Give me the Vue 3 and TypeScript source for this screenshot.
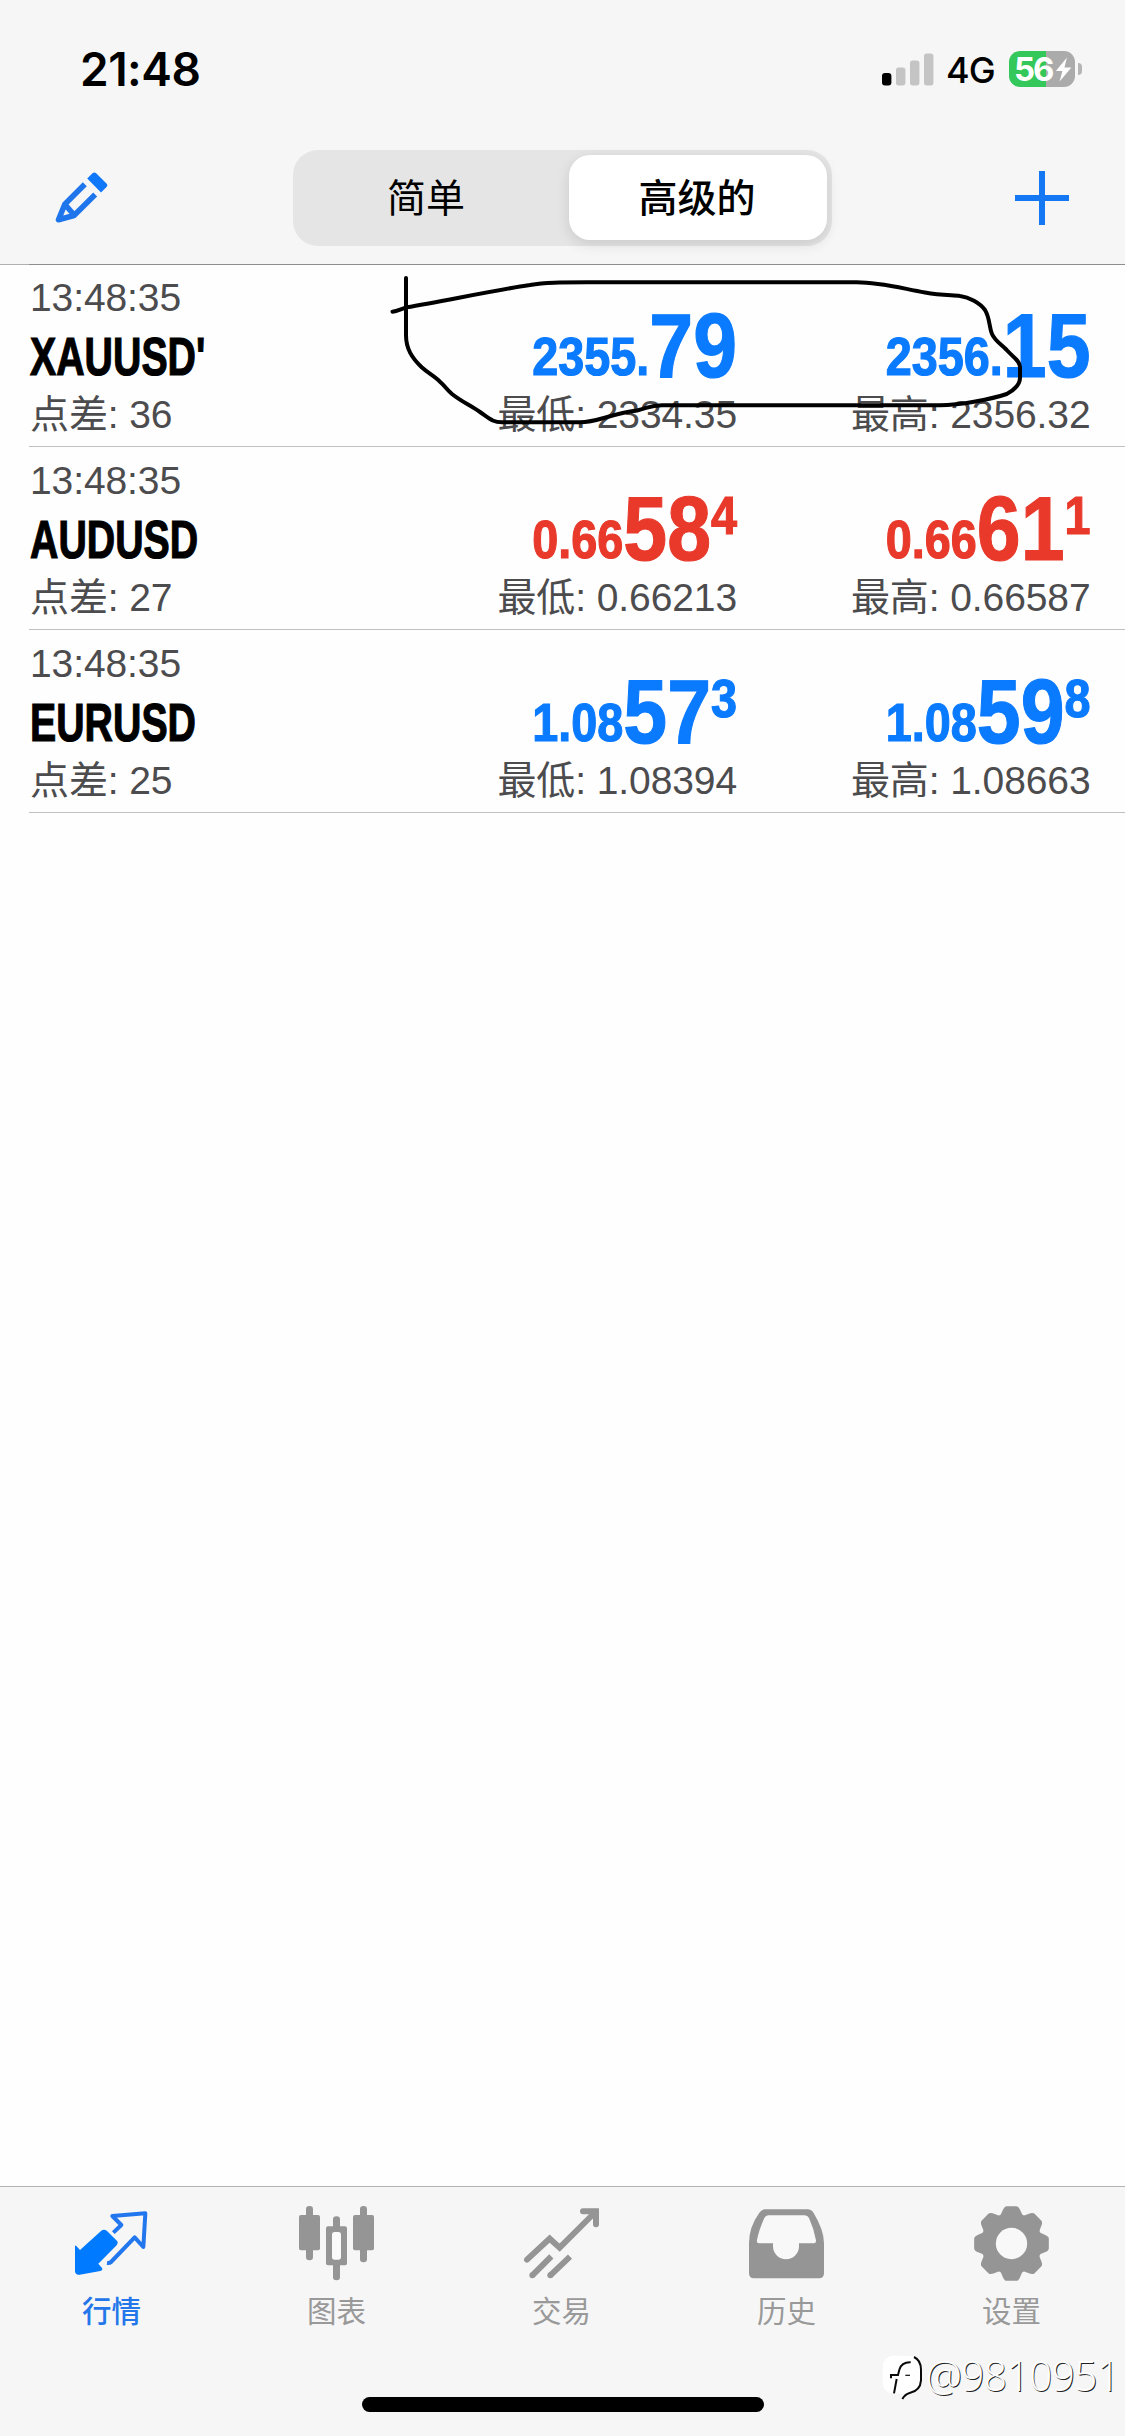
<script setup lang="ts">
interface Price {
  lead: string
  big: string
  sup: string
  label: string
  extreme: string
}

interface Quote {
  time: string
  symbol: string
  spread: number
  trend: 'up' | 'down'
  prices: Price[]
}

const quotes: Quote[] = [
  {
    time: '13:48:35',
    symbol: "XAUUSD'",
    spread: 36,
    trend: 'up',
    prices: [
      { lead: '2355.', big: '79', sup: '', label: '最低', extreme: '2334.35' },
      { lead: '2356.', big: '15', sup: '', label: '最高', extreme: '2356.32' },
    ],
  },
  {
    time: '13:48:35',
    symbol: 'AUDUSD',
    spread: 27,
    trend: 'down',
    prices: [
      { lead: '0.66', big: '58', sup: '4', label: '最低', extreme: '0.66213' },
      { lead: '0.66', big: '61', sup: '1', label: '最高', extreme: '0.66587' },
    ],
  },
  {
    time: '13:48:35',
    symbol: 'EURUSD',
    spread: 25,
    trend: 'up',
    prices: [
      { lead: '1.08', big: '57', sup: '3', label: '最低', extreme: '1.08394' },
      { lead: '1.08', big: '59', sup: '8', label: '最高', extreme: '1.08663' },
    ],
  },
]

const teeth = [0, 45, 90, 135, 180, 225, 270, 315]
</script>

<template>
  <div class="screen">
    <header class="header">
      <div class="status">
        <span class="clock">21:48</span>
        <div class="status-right">
          <svg class="signal" width="52" height="33" viewBox="0 0 52 33">
            <rect x="0" y="20" width="9.4" height="12.4" rx="3" fill="#000" />
            <rect x="14" y="14.4" width="9.4" height="18" rx="2.6" fill="#c4c4c4" />
            <rect x="28" y="7.4" width="9.4" height="25" rx="2.6" fill="#c4c4c4" />
            <rect x="42" y="0.4" width="9.4" height="32" rx="2.6" fill="#c4c4c4" />
          </svg>
          <span class="network">4G</span>
          <div class="battery">
            <span class="level">56</span>
            <svg width="17" height="25" viewBox="0 0 17 25">
              <path d="M12 0.5L0.8 14H7.4L4.6 24.5L16.4 10.6H9.4Z" fill="#fff" />
            </svg>
          </div>
          <span class="battery-cap"></span>
        </div>
      </div>
      <nav class="toolbar">
        <svg class="pencil" width="54" height="52" viewBox="0 0 54 52">
          <path d="M32.200 6.500L37.500 1.200Q39.300 -.3 41.200 1.300L51.500 11.500Q53.200 13.300 51.500 15L46 20.500Z" fill="#0f78fa" />
          <path d="M29.800 12.200L9.800 32.200L3.500 47.800L19 43.500L40.200 22.600M9.800 32.200L19.500 43.500" fill="none" stroke="#1f76ec" stroke-width="5.600" stroke-linejoin="round" />
        </svg>
        <div class="segment">
          <span class="option">简单</span>
          <span class="option active">高级的</span>
        </div>
        <svg class="plus" width="54" height="54" viewBox="0 0 54 54">
          <path d="M27 0V54M0 27H54" stroke="#1478f5" stroke-width="6" />
        </svg>
      </nav>
    </header>

    <main class="list">
      <section v-for="q in quotes" :key="q.symbol" class="row">
        <div class="info">
          <div class="small">{{ q.time }}</div>
          <div class="symbol"><span>{{ q.symbol }}</span></div>
          <div class="small">点差: {{ q.spread }}</div>
        </div>
        <div v-for="p in q.prices" :key="p.label" class="quote">
          <div class="price" :class="q.trend"><span class="lead">{{ p.lead }}</span><span>{{ p.big }}</span><span v-if="p.sup" class="sup">{{ p.sup }}</span></div>
          <div class="small">{{ p.label }}: {{ p.extreme }}</div>
        </div>
      </section>
    </main>

    <!-- freehand annotation over the first quote -->
    <svg class="scribble" width="640" height="160" viewBox="385 270 640 160">
      <path
        d="M406 278V335C406 349 412 358 421.700 367.300C428 373 434 376 440 381.700C446 387 445 388 452 394C462 402 470 405 480 412C490 419 493 422.300 502 422.300H580C597 422.300 610 414 637 410.500C648 408 650 405.300 662 405.300H940C960 405.300 992 399 1006.700 394C1014 390 1020 385 1020 378V367C1020 361 1013 357 1006.700 350C1001 344 995 341 992 334C989 327 990 318 985 310C980 303 969 297 960 296C953 295 942 295.500 925 292.500C900 288 880 282.300 856.700 282.300H587C560 282.300 545 282.300 530 285C490 291 440 302 406.700 307.300C401 309 397 311 392.500 311.700"
        fill="none" stroke="#000" stroke-width="4" stroke-linecap="round" stroke-linejoin="round"
      />
    </svg>

    <footer class="tabbar">
      <div class="tabs">
        <div class="tab selected">
          <svg width="75" height="75" viewBox="222 108 225 225">
            <path d="M225 228Q226 224 231 230L240 240L303 183Q312 176 321 183L352 214Q356 220 350 226L295 281L306 294Q309 301 301 303L239 314Q226 316 225 304Z" fill="#007aff" />
            <path d="M340 188L364 165L337 138L436 130L430 231L404 202L333 276Q329 280 321 279" fill="none" stroke="#2377ee" stroke-width="12" stroke-linejoin="round" />
          </svg>
          <span>行情</span>
        </div>
        <div class="tab">
          <svg width="75" height="75" viewBox="897 107 225 225">
            <g fill="#959595">
              <rect x="918" y="107" width="21" height="163" rx="10" />
              <rect x="897" y="134" width="63" height="106" rx="6" />
              <rect x="1080" y="107" width="21" height="169" rx="10" />
              <rect x="1059" y="134" width="63" height="106" rx="6" />
              <rect x="999" y="138" width="21" height="50" rx="10" />
              <rect x="999" y="270" width="21" height="60" rx="10" />
              <rect x="978" y="168" width="63" height="117" rx="6" />
            </g>
            <rect x="996" y="185" width="27" height="83" rx="8" fill="#fafafa" />
          </svg>
          <span>图表</span>
        </div>
        <div class="tab">
          <svg width="75" height="75" viewBox="312 107 225 225">
            <g fill="none" stroke="#959595" stroke-width="18">
              <path d="M321 268L389 205L419 232L526 125" stroke-linecap="round" stroke-linejoin="miter" />
              <path d="M489 123H528V162" stroke-linecap="round" />
              <path d="M394 258L337 315M450 259L391 315" />
            </g>
            <circle cx="337" cy="315" r="9" fill="#959595" />
            <circle cx="391" cy="315" r="9" fill="#959595" />
          </svg>
          <span>交易</span>
        </div>
        <div class="tab">
          <svg width="75" height="75" viewBox="987 107 225 225">
            <path d="M1035 117H1163Q1174 117 1181 128Q1212 180 1212 218V309Q1212 324 1197 324H1002Q987 324 987 309V218Q987 170 1018 127Q1025 117 1035 117Z" fill="#959595" />
            <path d="M1045 135H1154Q1163 135 1167 143Q1182 176 1188 210Q1189 219 1181 219H1137V228A39 39 0 0 1 1059 228V219H1017Q1009 219 1011 209Q1017 178 1033 143Q1037 135 1045 135Z" fill="#f8f8f8" />
          </svg>
          <span>历史</span>
        </div>
        <div class="tab">
          <svg width="75" height="75" viewBox="-112.500 -112.500 225 225">
            <circle r="91" fill="#959595" />
            <path v-for="a in teeth" :key="a" d="M-38 -80Q-31 -86 -27 -98Q-22 -112 -14 -112H14Q22 -112 27 -98Q31 -86 38 -80Z" :transform="`rotate(${a})`" fill="#959595" />
            <circle r="47" fill="#f8f8f8" />
          </svg>
          <span>设置</span>
        </div>
      </div>
      <div class="home"></div>
    </footer>

    <div class="watermark">
      <svg width="42" height="46" viewBox="187 556 126 138">
        <path d="M218 558H270Q303 562 307 598V632Q304 668 270 675Q258 678 247 690L249 672H222Q189 668 189 636V592Q190 562 218 558Z" fill="#fff" />
        <path d="M283 562Q304 572 304 600V632Q302 663 270 670Q256 674 248 688" fill="none" stroke="#0a0a0a" stroke-width="6" />
        <path d="M273 578Q246 577 239 600L235 616H214V626M231 628L223 671" fill="none" stroke="#0a0a0a" stroke-width="6" />
        <path d="M257 617H271" fill="none" stroke="#222" stroke-width="4" />
      </svg>
      <span>@9810951</span>
    </div>
  </div>
</template>

<style>
body {
  margin: 0;
  background: #fff;
}
</style>

<style scoped>
.screen {
  position: relative;
  width: 1125px;
  height: 2436px;
  overflow: hidden;
  display: flex;
  flex-direction: column;
  background: #fefefe;
  font-family: "Liberation Sans", "Noto Sans CJK SC", sans-serif;
}
.header {
  box-sizing: border-box;
  height: 265px;
  background: #f6f6f6;
  border-bottom: 1px solid #b0b0b0;
}
.status {
  box-sizing: border-box;
  height: 138px;
  padding: 0 43px 0 80px;
  display: flex;
  align-items: center;
  justify-content: space-between;
  font-family: Inter, sans-serif;
}
.clock {
  font-size: 46px;
  font-weight: 600;
  letter-spacing: -0.5px;
}
.status-right {
  display: flex;
  align-items: center;
}
.network {
  margin-left: 12.500px;
  width: 50px;
  font-size: 36px;
  font-weight: 500;
  letter-spacing: -1px;
  line-height: 36px;
  padding-top: 2px;
}
.battery {
  margin-left: 13px;
  box-sizing: border-box;
  width: 66px;
  height: 36px;
  padding: 0 3px 0 5px;
  border-radius: 11px;
  background: linear-gradient(90deg, #34c759 56%, #ababab 56%);
  display: flex;
  align-items: center;
  justify-content: space-between;
}
.level {
  color: #fff;
  font-size: 33px;
  font-weight: 700;
  letter-spacing: -2px;
  line-height: 36px;
}
.battery-cap {
  margin-left: 3px;
  width: 4px;
  height: 12px;
  border-radius: 0 6px 6px 0;
  background: #b5b5b5;
}
.toolbar {
  box-sizing: border-box;
  display: flex;
  align-items: center;
  justify-content: space-between;
  height: 119px;
  padding: 0 56px 0 55px;
}
.segment {
  box-sizing: border-box;
  display: flex;
  width: 539px;
  height: 96px;
  margin-left: 1px;
  padding: 5px 5.500px 6px;
  border-radius: 25px;
  background: #e5e5e6;
}
.option {
  flex: 1;
  display: flex;
  align-items: center;
  justify-content: center;
  box-sizing: border-box;
  padding-right: 15px;
  padding-top: 3px;
  font-size: 39px;
  line-height: 82px;
  border-radius: 21px;
}
.option.active {
  flex: none;
  width: 258px;
  padding-right: 1px;
  font-weight: 500;
  background: #fff;
  box-shadow: 0 4px 14px rgba(0, 0, 0, 0.12);
}
.list {
  position: relative;
  margin-top: -1px;
  flex: 1;
  padding-left: 29px;
}
.row {
  box-sizing: border-box;
  display: grid;
  grid-template-columns: 1fr 352px 353.500px;
  height: 183px;
  padding: 0 34.500px 0 1px;
  border-bottom: 1px solid #c0c0c2;
}
.row:first-child {
  box-shadow: inset 0 1px #8e8e8e;
}
.info {
  padding-top: 11px;
}
.small {
  font-size: 39px;
  line-height: 46px;
  letter-spacing: -0.1px;
  color: #4c4c4e;
  white-space: nowrap;
}
.symbol {
  padding-top: 1px;
  height: 70px;
  font-size: 54px;
  line-height: 69px;
  font-weight: 700;
  color: #000;
  -webkit-text-stroke: 1.200px currentColor;
}
.symbol span {
  display: inline-block;
  transform: scaleX(0.728);
  transform-origin: left;
}
.quote {
  padding-top: 36px;
  text-align: right;
}
.price {
  height: 92px;
  font-size: 91px;
  line-height: 92px;
  font-weight: 700;
  white-space: nowrap;
  transform: scaleX(0.866);
  transform-origin: right;
  -webkit-text-stroke: 1.200px currentColor;
}
.price.up {
  color: #0a7aff;
}
.price.down {
  color: #e8392b;
}
.lead,
.sup {
  font-size: 54px;
  line-height: 0;
  vertical-align: 2px;
}
.sup {
  vertical-align: 26px;
}
.scribble {
  position: absolute;
  left: 385px;
  top: 270px;
}
.tabbar {
  box-sizing: border-box;
  height: 250px;
  border-top: 1px solid #b2b2b2;
  background: #f6f6f6;
  display: flex;
  flex-direction: column;
  align-items: center;
}
.tabs {
  display: flex;
  width: 1125px;
  height: 210px;
}
.tab {
  flex: 1;
  display: flex;
  flex-direction: column;
  align-items: center;
  padding-top: 19px;
  padding-right: 2px;
  font-size: 29.500px;
  line-height: 40px;
  color: #999;
}
.tab span {
  margin-top: 11px;
}
.tab.selected {
  color: #2377ea;
  font-weight: 500;
}
.home {
  width: 402px;
  height: 15px;
  border-radius: 8px;
  background: #000;
}
.watermark {
  position: absolute;
  left: 882px;
  top: 2355px;
  width: 243px;
  display: flex;
  color: #fff;
  font-family: "Open Sans", sans-serif;
  font-size: 43px;
  font-weight: 300;
  line-height: 39px;
  text-shadow: 1px 1px 0 #222;
}
.watermark span {
  width: 190px;
  margin-left: 2px;
  letter-spacing: -0.5px;
  transform: scaleX(0.94);
  transform-origin: left;
}
</style>
